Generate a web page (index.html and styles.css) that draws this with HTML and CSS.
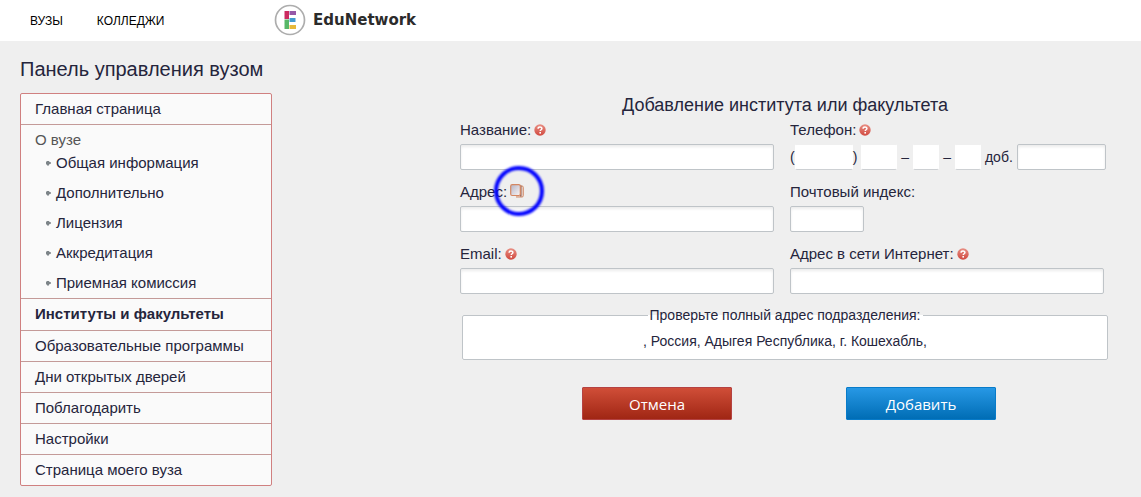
FILE: index.html
```html
<!DOCTYPE html>
<html lang="ru">
<head>
<meta charset="utf-8">
<title>EduNetwork — Панель управления вузом</title>
<link rel="stylesheet" href="styles.css">
</head>
<body>
<svg class="defs" aria-hidden="true">
  <defs>
    <linearGradient id="help-fill" x1="0" y1="0" x2="0" y2="1">
      <stop offset="0" stop-color="#e88f84"/>
      <stop offset="1" stop-color="#d1493f"/>
    </linearGradient>
    <linearGradient id="page-fill" x1="0" y1="0" x2="1" y2="1">
      <stop offset="0" stop-color="#b4b4c6"/>
      <stop offset="1" stop-color="#fbf6f6"/>
    </linearGradient>
    <symbol id="help" viewBox="0 0 12 12">
      <circle cx="6" cy="6" r="5.7" fill="url(#help-fill)"/>
      <path d="M4.1 4.7C4.1 2.5 7.9 2.5 7.9 4.6C7.9 5.8 6.2 5.7 6.2 7.1" fill="none" stroke="#fff" stroke-width="1.5"/>
      <rect x="5.4" y="8" width="1.6" height="1.6" fill="#fff"/>
    </symbol>
  </defs>
</svg>
<header class="header">
  <nav class="nav">
    <a href="#">ВУЗЫ</a>
    <a href="#">КОЛЛЕДЖИ</a>
  </nav>
  <a class="logo" href="#">
    <svg class="logo-mark" viewBox="0 0 32 32" aria-hidden="true">
      <circle cx="16" cy="16" r="14.5" fill="#fff" stroke="#adadad" stroke-width="1.7"/>
      <path d="M10.500 7h4.500v8h-4.500z" fill="#cb2b60"/>
      <path d="M15.500 7H22v4h-6.500z" fill="#9658a8"/>
      <path d="M15.500 14H21.500v4h-6z" fill="#429bd0"/>
      <path d="M10.500 15.500h4.500V25h-4.500z" fill="#57b768"/>
      <path d="M15.500 21H22v4h-6.500z" fill="#e7b93b"/>
    </svg>
    <span>EduNetwork</span>
  </a>
</header>
<div class="page">
  <aside class="side">
    <h1 class="side-title">Панель управления вузом</h1>
    <ul class="menu">
      <li><a href="#">Главная страница</a></li>
      <li class="group">
        <span class="group-title">О вузе</span>
        <ul class="submenu">
          <li><a href="#">Общая информация</a></li>
          <li><a href="#">Дополнительно</a></li>
          <li><a href="#">Лицензия</a></li>
          <li><a href="#">Аккредитация</a></li>
          <li><a href="#">Приемная комиссия</a></li>
        </ul>
      </li>
      <li class="active"><a href="#">Институты и факультеты</a></li>
      <li><a href="#">Образовательные программы</a></li>
      <li><a href="#">Дни открытых дверей</a></li>
      <li><a href="#">Поблагодарить</a></li>
      <li><a href="#">Настройки</a></li>
      <li><a href="#">Страница моего вуза</a></li>
    </ul>
  </aside>
  <main class="main">
    <form>
      <h2 class="form-title">Добавление института или факультета</h2>
      <div class="fields">
        <div class="field">
          <div class="label"><label for="name">Название:</label><svg class="help"><use href="#help"/></svg></div>
          <input id="name" type="text">
        </div>
        <div class="field">
          <div class="label"><label for="code">Телефон:</label><svg class="help"><use href="#help"/></svg></div>
          <div class="phone">
            <span class="code">(<input class="plain w-code" id="code" type="text">)</span>
            <input class="plain w-three" type="text" aria-label="Первая часть номера">
            <span>–</span>
            <input class="plain w-two" type="text" aria-label="Вторая часть номера">
            <span>–</span>
            <input class="plain w-two" type="text" aria-label="Третья часть номера">
            <label for="ext">доб.</label>
            <input class="w-ext" id="ext" type="text">
          </div>
        </div>
        <div class="field">
          <div class="label"><label for="address">Адрес:</label>
            <span class="book">
              <svg viewBox="0 0 14 14" aria-hidden="true">
                <path d="M4 2h8q1.300 0 1.300 1.300v8.400q0 1.300-1.300 1.300H6" fill="#e9d5cc" stroke="#d18d6c"/>
                <path d="M10.800 1.500v11" stroke="#87544a" stroke-width="1.300"/>
                <rect x=".7" y=".7" width="9.600" height="10.800" rx="1.500" fill="url(#page-fill)" stroke="#d48762" stroke-width="1.200"/>
              </svg>
              <span class="ring"></span>
            </span>
          </div>
          <input id="address" type="text">
        </div>
        <div class="field">
          <div class="label"><label for="zip">Почтовый индекс:</label></div>
          <input class="w-zip" id="zip" type="text">
        </div>
        <div class="field">
          <div class="label"><label for="email">Email:</label><svg class="help"><use href="#help"/></svg></div>
          <input id="email" type="email">
        </div>
        <div class="field">
          <div class="label"><label for="site">Адрес в сети Интернет:</label><svg class="help"><use href="#help"/></svg></div>
          <input id="site" type="text">
        </div>
      </div>
      <fieldset class="check">
        <legend>Проверьте полный адрес подразделения:</legend>
        <p>, Россия, Адыгея Республика, г. Кошехабль,</p>
      </fieldset>
      <div class="actions">
        <button class="btn btn-red" type="button">Отмена</button>
        <button class="btn btn-blue" type="submit">Добавить</button>
      </div>
    </form>
  </main>
</div>
</body>
</html>
```

FILE: styles.css
```css
* { box-sizing: border-box; }

body {
  margin: 0;
  background: #efefef;
  color: #25253c;
  font: 15px/20px "Liberation Sans", Arial, sans-serif;
}

a { color: inherit; text-decoration: none; }
ul { margin: 0; padding: 0; list-style: none; }
.defs { position: absolute; width: 0; height: 0; }

.header {
  display: flex;
  align-items: center;
  height: 41px;
  padding: 0 30px 2px;
  background: #fff;
  color: #000;
}
.nav {
  display: flex;
  gap: 34px;
  width: 244px;
  padding-top: 2px;
  font-size: 12px;
}
.logo {
  display: flex;
  align-items: center;
  gap: 7px;
  color: #2b2b2b;
  font: 700 15px/24px "DejaVu Sans", sans-serif;
}
.logo-mark { width: 32px; height: 32px; }

.page {
  display: flex;
  align-items: flex-start;
  gap: 188px;
  padding: 16px 31px 11px 20px;
}
.side { flex: 0 0 252px; }
.side-title {
  margin: 0 0 12px;
  font-size: 20px;
  font-weight: 400;
  line-height: 24px;
}
.menu {
  border: 1px solid #d08080;
  border-radius: 2px;
  background: #fafafa;
}
.menu > li + li { border-top: 1px solid #c49a98; }
.menu > li > a {
  display: block;
  padding: 5px 14px;
}
.menu > .active > a { padding-bottom: 6px; font-weight: 700; }
.group-title {
  display: block;
  padding: 7px 14px 0;
  color: #555;
  line-height: 16px;
}
.submenu a {
  display: flex;
  align-items: center;
  gap: 5px;
  padding: 5px 25px;
}
.submenu a::before {
  content: "";
  width: 5px;
  height: 5px;
  background: #7d8488;
  clip-path: polygon(0 20%, 20% 20%, 20% 0, 60% 0, 60% 20%, 100% 40%, 100% 60%, 60% 80%, 60% 100%, 20% 100%, 20% 80%, 0 80%);
}

.main { flex: 1; min-width: 0; padding-top: 38px; }
.form-title {
  margin: 0 0 5px;
  font-size: 18px;
  font-weight: 400;
  line-height: 20px;
  text-align: center;
}
.fields {
  display: grid;
  grid-template-columns: 1fr 1fr;
  gap: 12px 16px;
  margin-right: 6px;
}
.field { min-width: 0; }
.label {
  display: flex;
  align-items: center;
  gap: 3px;
  height: 20px;
  margin-bottom: 4px;
}
.help { width: 12px; height: 12px; }
.book { position: relative; width: 14px; height: 14px; margin-bottom: 2px; }
.book svg { display: block; width: 14px; height: 14px; }
.ring {
  position: absolute;
  top: -18px;
  left: -16px;
  width: 50px;
  height: 50px;
  border: 4px solid #0000ff;
  border-radius: 50%;
  filter: blur(1px);
  pointer-events: none;
}

input {
  display: block;
  width: 100%;
  height: 26px;
  padding: 0 6px;
  border: 1px solid #bfc4c8;
  border-radius: 2px;
  background: #fff;
  box-shadow: inset 0 2px 3px #ececec;
  font: inherit;
  color: inherit;
}
.phone, .code { display: flex; align-items: center; }
.phone { gap: 4px; font-size: 14px; }
.phone input { flex: none; }
.plain {
  border-color: #efefef #fff #cdd0d3;
  box-shadow: none;
}
.w-code { width: 58px; }
.w-three { width: 36px; }
.w-two { width: 26px; }
.w-ext { width: 89px; }
.w-zip { width: 74px; }

.check {
  margin: 11px 2px 27px;
  padding: 6px 12px 8px;
  border: 1px solid #bfc4c8;
  border-radius: 2px;
  background: #fff;
  font-size: 14px;
  text-align: center;
}
.check legend { margin: 0 auto; padding: 0 2px; line-height: 20px; }
.check p { margin: 0; }

.actions {
  display: flex;
  justify-content: center;
  gap: 114px;
  padding-left: 8px;
}
.btn {
  width: 150px;
  height: 33px;
  padding: 0;
  border: 1px solid;
  border-radius: 1px;
  color: #fff;
  font: 15px/20px "Open Sans", "Noto Sans", sans-serif;
}
.btn-red {
  border-color: #b54242;
  background: linear-gradient(#d04e38, #a02614);
}
.btn-blue {
  border-color: #087bc9;
  background: linear-gradient(#2798e5, #006db5);
}
```
